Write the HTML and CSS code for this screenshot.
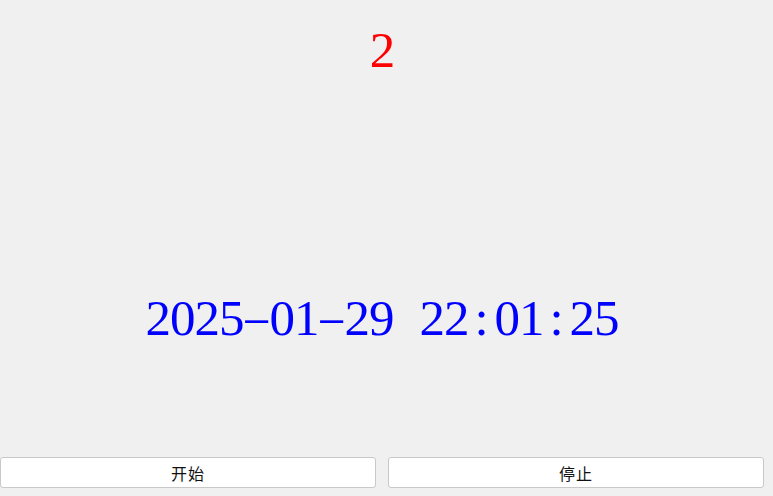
FILE: index.html
```html
<!DOCTYPE html>
<html lang="zh-CN">
<head>
<meta charset="utf-8">
<title>计时</title>
<link rel="stylesheet" href="styles.css">
</head>
<body>
<div class="app">
  <div class="count">2</div>
  <div class="clock">2025<span class="sep"><span class="dash">-</span></span>01<span class="sep"><span class="dash">-</span></span>29<span class="sep"> </span>22<span class="sep">:</span>01<span class="sep">:</span>25</div>
  <div class="actions">
    <button class="btn" type="button">开始</button>
    <button class="btn" type="button">停止</button>
  </div>
</div>
</body>
</html>
```
FILE: styles.css
```css
html, body {
  margin: 0;
  padding: 0;
  background: #f0f0f0;
}
.app {
  width: 764px;
  height: 496px;
  display: flex;
  flex-direction: column;
}
.count, .clock {
  font-family: "Liberation Serif", "Times New Roman", serif;
  font-size: 51px;
  line-height: 1;
  text-align: center;
  letter-spacing: -1px;
}
.count {
  color: #ff0000;
  margin-top: 25px;
}
.clock {
  color: #0000ff;
  margin-top: 217px;
  white-space: pre;
}
.sep {
  display: inline-block;
  width: 26px;
  text-align: center;
  letter-spacing: 0;
}
.dash {
  display: inline-block;
  transform: scale(1.75, 0.7);
}
.actions {
  margin-top: auto;
  margin-bottom: 8px;
  display: flex;
  gap: 12px;
}
.btn {
  flex: 1;
  height: 31px;
  margin: 0;
  padding: 0;
  background: #ffffff;
  border: 1px solid #c8c8c8;
  border-radius: 3px;
  font-family: "Noto Sans CJK SC", sans-serif;
  font-size: 16px;
  color: #111;
  letter-spacing: 1px;
}
```
